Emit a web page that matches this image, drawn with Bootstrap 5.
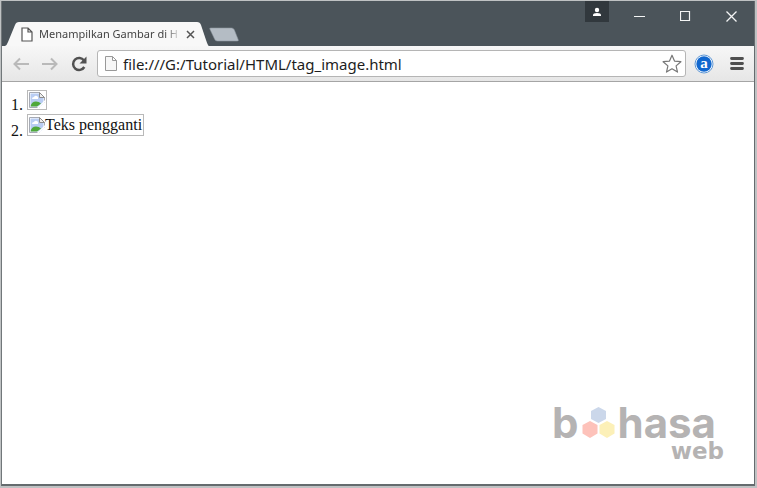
<!DOCTYPE html>
<html lang="id">
<head>
<meta charset="utf-8">
<meta name="viewport" content="width=device-width, initial-scale=1">
<title>Menampilkan Gambar di HTML</title>
<link rel="stylesheet" href="https://cdn.jsdelivr.net/npm/bootstrap@5.3.0/dist/css/bootstrap.min.css">
<style>
body { background: #bfc2c3; font-family: "Noto Sans", "Open Sans", sans-serif; padding: 1px 2px 1px 1px; }
button { border: 0; background: none; padding: 0; color: inherit; display: flex; align-items: center; justify-content: center; }
svg { display: block; flex: none; }
.browser { border: 1px solid #656b6e; border-top: 0; border-left-color: #71777a; border-bottom-width: 2px; background: #fff; }
.titlebar { background: #4b545a; height: 45px; padding-left: 3px; }
.tab { width: 204px; height: 24px; padding: 0 12px 0 16px; }
.tab-shape { position: absolute; left: 0; top: 0; }
.tab-title { font-size: 11px; line-height: 24px; color: #444; width: 140px; margin: 0 2px 0 6px; white-space: nowrap; -webkit-mask-image: linear-gradient(90deg, #000 126px, transparent 142px); mask-image: linear-gradient(90deg, #000 126px, transparent 142px); }
.tab-close { width: 18px; height: 22px; }
.win { width: 46px; height: 30px; color: #f4f5f5; }
.profile { width: 24px; height: 21px; background: #31383d; margin-right: 7px; }
.toolbar { height: 36px; background: linear-gradient(#f7f7f7, #e6e6e6); border-bottom: 1px solid #a5a5a5; padding: 0 10px 0 4px; }
.tool { width: 29px; height: 28px; }
.address { height: 27px; border: 1px solid #b5b5b5; border-radius: 3px; background: #fff; margin-left: 4px; padding: 0 3px 0 7px; }
.address input { border: 0; outline: 0; padding: 0; margin-left: 6px; font-size: 15px; line-height: 22px; color: #1d1d1d; background: none; min-width: 0; }
.page { min-height: calc(100vh - 86px); font: 16px/18px "Liberation Serif", serif; color: #111; padding: 8px 30px 24px 9px; }
.broken { border: 1px solid #b9b9b9; padding: 1px; }
.entry { gap: 4px; }
.entry-number { line-height: 10px; }
.brand { color: #b5b3b3; }
.brand-top { font: 700 42px/38px Inter, sans-serif; padding-right: 8px; gap: 3px; }
.brand-sub { font: 700 23px/18px "DejaVu Sans", sans-serif; }
</style>
<script src="https://cdn.jsdelivr.net/npm/bootstrap@5.3.0/dist/js/bootstrap.bundle.min.js"></script>
</head>
<body>
<svg width="0" height="0" class="position-absolute" aria-hidden="true">
  <symbol id="brokenpic" viewBox="0 0 16 16">
    <path d="M.5.5h10l5 5v10H.5z" fill="#fff" stroke="#a6aab4"/>
    <path d="M1.500 1.500h9v4.500h4v8.500h-13z" fill="#b9cdf3"/>
    <path d="M3 7q0-2 2-2 1-2 3-1 2 1 1 3z" fill="#fff"/>
    <path d="M1.500 14.500q1-5 5.500-5 3 0 5 2l-4 3z" fill="#4fa83a"/>
    <path d="M10.500.5v5h5z" fill="#eee" stroke="#8d8d8d"/>
    <path d="M8 16l8-8v2l-6 6z" fill="#fff"/>
    <path d="M10 16l6-6v6z" fill="#fff"/>
  </symbol>
</svg>
<div class="browser d-flex flex-column">
  <header class="titlebar d-flex">
    <div class="tab position-relative d-flex align-items-center align-self-end">
      <svg class="tab-shape" width="204" height="24" viewBox="0 0 204 24"><path d="M0 24q2-1 3-4L10 3q1-3 4-3h178q3 0 4 3l5 15q2 6 3 6z" fill="#f8f8f8"/></svg>
      <div class="position-relative d-flex align-items-center">
        <svg width="12" height="15" viewBox="0 0 12 15"><path d="M1 1h6l4 4v9H1zM7 1v4h4" fill="#fff" stroke="#555" stroke-width="1.200"/></svg>
        <span class="tab-title">Menampilkan Gambar di H</span>
        <button class="tab-close" aria-label="Tutup tab"><svg width="9" height="9" viewBox="0 0 9 9"><path d="M1 1l7 7M8 1L1 8" stroke="#555" stroke-width="1.500"/></svg></button>
      </div>
    </div>
    <button class="align-self-end mb-1" aria-label="Tab baru"><svg width="30" height="15" viewBox="0 0 32 15"><path d="M2 .5h22q2 0 3 2l4 10q1 2-1 2H9q-2 0-3-2L1 2Q0 .500 2 .500z" fill="#b4bcc4" stroke="#89939b" stroke-width=".600"/></svg></button>
    <div class="ms-auto d-flex">
      <button class="profile" aria-label="Profil"><svg width="10" height="10" viewBox="0 0 10 10" fill="#fff"><circle cx="5" cy="3" r="2.200"/><path d="M1 9V8q0-2 4-2t4 2v1z"/></svg></button>
      <button class="win" aria-label="Kecilkan"><svg width="11" height="11"><path d="M0 5.500h11" stroke="currentColor"/></svg></button>
      <button class="win" aria-label="Besarkan"><svg width="11" height="11"><path d="M.5.5h9v9h-9z" fill="none" stroke="currentColor" stroke-width="1.200"/></svg></button>
      <button class="win" aria-label="Tutup"><svg width="11" height="11"><path d="M.5.5l10 10M10.500.5l-10 10" stroke="currentColor" stroke-width="1.300"/></svg></button>
    </div>
  </header>
  <nav class="toolbar d-flex align-items-center">
    <button class="tool" aria-label="Kembali"><svg width="16" height="14" viewBox="0 0 16 14"><path d="M7 1.500L1.500 7 7 12.500M2 7h14" fill="none" stroke="#b9b9b9" stroke-width="2"/></svg></button>
    <button class="tool" aria-label="Maju"><svg width="16" height="14" viewBox="0 0 16 14"><path d="M9 1.500L14.500 7 9 12.500M14 7H0" fill="none" stroke="#b9b9b9" stroke-width="2"/></svg></button>
    <button class="tool" aria-label="Muat ulang"><svg width="16" height="16" viewBox="0 0 16 16"><path d="M13 4.500A6 6 0 1 0 13.300 11" fill="none" stroke="#515151" stroke-width="2.500"/><path d="M15.500.5v7h-7z" fill="#515151"/></svg></button>
    <div class="address d-flex align-items-center flex-grow-1">
      <svg width="12" height="15" viewBox="0 0 12 15"><path d="M.5.5h7l4 4v10H.5zM7.500.5v4h4" fill="#f7f7f7" stroke="#999"/></svg>
      <input class="flex-grow-1" type="text" aria-label="Alamat" value="file:///G:/Tutorial/HTML/tag_image.html">
      <button aria-label="Tandai"><svg width="20" height="19" viewBox="0 0 20 19"><path d="M10 1.200l2.500 5.900 6.400.6-4.800 4.200 1.400 6.200-5.500-3.300-5.500 3.300 1.400-6.200L1.100 7.700l6.400-.6z" fill="#fff" stroke="#777" stroke-width="1.200" stroke-linejoin="round"/></svg></button>
    </div>
    <button class="ms-2" aria-label="Ekstensi a"><svg width="20" height="20" viewBox="0 0 20 20"><circle cx="10" cy="10" r="9" fill="#fff" stroke="#5f98d6"/><circle cx="10" cy="10" r="7.700" fill="#1268cf"/><text x="10" y="14" text-anchor="middle" font-family="Liberation Serif, serif" font-weight="700" font-size="15" fill="#fff">a</text></svg></button>
    <button class="ms-3" aria-label="Menu"><svg width="14" height="13" viewBox="0 0 14 13"><path d="M1.500 1.500h11M1.500 6.500h11M1.500 11.500h11" stroke="#505050" stroke-width="2.800" stroke-linecap="round"/></svg></button>
  </nav>
  <main class="page d-flex flex-column">
    <div class="entry d-flex align-items-end mb-1"><span class="entry-number">1.</span><span class="broken"><svg width="16" height="16" role="img" aria-label="Gambar"><use href="#brokenpic"/></svg></span></div>
    <div class="entry d-flex align-items-end"><span class="entry-number">2.</span><span class="broken d-flex"><svg width="16" height="18" viewBox="0 0 16 16" aria-hidden="true"><use href="#brokenpic"/></svg><span>Teks pengganti</span></span></div>
    <div class="brand mt-auto align-self-end d-flex flex-column align-items-end">
      <div class="brand-top d-flex align-items-center"><span>b</span>
        <svg width="33" height="32" viewBox="0 0 33 32"><path d="M16.500 0l7.500 4v8l-7.500 4-7.500-4V4z" fill="#cbd7ea"/><path d="M8 14l7.500 4v8.500L8 31 .500 26.500V18z" fill="#fdc2ba"/><path d="M25 14l7.500 4v8.500L25 31l-7.500-4.500V18z" fill="#fcf0b8"/></svg>
        <span>hasa</span></div>
      <div class="brand-sub">web</div>
    </div>
  </main>
</div>
</body>
</html>
